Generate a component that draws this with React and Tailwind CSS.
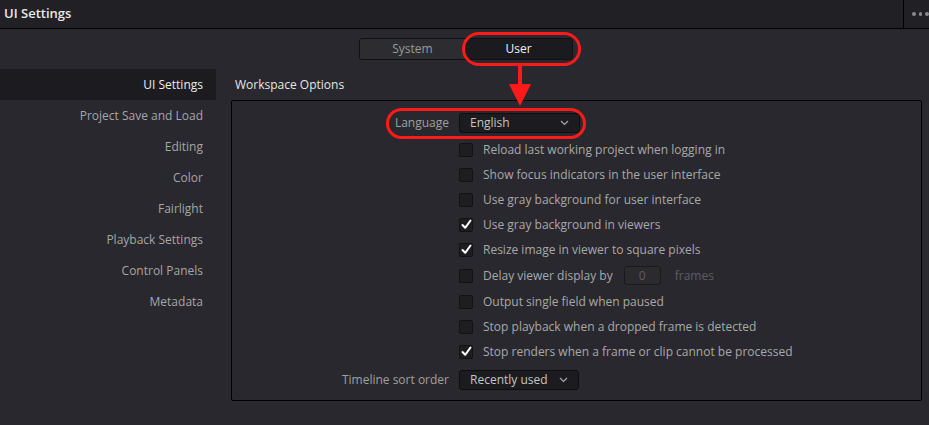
import React from 'react'

const sidebarItems = [
  'UI Settings',
  'Project Save and Load',
  'Editing',
  'Color',
  'Fairlight',
  'Playback Settings',
  'Control Panels',
  'Metadata',
]

const options = [
  { label: 'Reload last working project when logging in', checked: false },
  { label: 'Show focus indicators in the user interface', checked: false },
  { label: 'Use gray background for user interface', checked: false },
  { label: 'Use gray background in viewers', checked: true },
  { label: 'Resize image in viewer to square pixels', checked: true },
  { label: 'Delay viewer display by', checked: false, delay: true },
  { label: 'Output single field when paused', checked: false },
  { label: 'Stop playback when a dropped frame is detected', checked: false },
  { label: 'Stop renders when a frame or clip cannot be processed', checked: true },
]

function Checkbox({ checked }) {
  return (
    <div className="w-[14px] h-[14px] rounded-[2px] bg-[#1e1e22] border border-[#121214] flex items-center justify-center">
      {checked && (
        <svg width="11" height="11" viewBox="0 0 11 11">
          <path d="M1.5 6 L4.2 8.8 L9.5 1.5" fill="none" stroke="#fff" strokeWidth="2" strokeLinecap="round" strokeLinejoin="round" />
        </svg>
      )}
    </div>
  )
}

function Chevron() {
  return (
    <svg width="9" height="6" viewBox="0 0 9 6">
      <path d="M1 1 L4.5 4.5 L8 1" fill="none" stroke="#a8a8a8" strokeWidth="1.2" />
    </svg>
  )
}

function Dropdown({ value, className }) {
  return (
    <div className={`h-[20px] bg-[#1c1c20] border border-[#0e0e10] rounded-[3px] flex items-center justify-between pl-[10px] pr-[10px] text-[#c4c4c4] ${className}`}>
      <span>{value}</span>
      <Chevron />
    </div>
  )
}

export default function App() {
  return (
    <div
      className="relative w-[929px] h-[425px] bg-[#28282e] text-[12px] overflow-hidden"
      style={{ fontFamily: '"Open Sans", "Noto Sans", sans-serif' }}
    >
      {/* Header */}
      <div className="h-[29px] bg-[#202025] border-b border-black flex items-stretch">
        <div className="flex-1 flex items-center pl-[4px] text-[13px] font-semibold text-[#e8e8e8]">UI Settings</div>
        <div className="w-[26px] border-l border-black flex items-center gap-[3px] pl-[8px]">
          <span className="w-[4px] h-[4px] rounded-full bg-[#8a8a8e]" />
          <span className="w-[4px] h-[4px] rounded-full bg-[#8a8a8e]" />
          <span className="w-[4px] h-[4px] rounded-full bg-[#8a8a8e]" />
        </div>
      </div>

      {/* Tabs */}
      <div className="flex justify-center mt-[9px] ml-[3px]">
        <div className="flex h-[22px] border border-[#111113] rounded-[3px] overflow-hidden">
          <div className="w-[105px] flex items-center justify-center bg-[#2c2c31] text-[#9a9a9a]">System</div>
          <div className="w-[107px] flex items-center justify-center bg-[#1b1b1f] text-[#f0f0f0]">User</div>
        </div>
      </div>

      {/* Main */}
      <div className="flex mt-[9px]">
        <div className="w-[216px] flex flex-col">
          {sidebarItems.map((item, i) => (
            <div
              key={item}
              className={`h-[31px] flex items-center justify-end pr-[13px] ${i === 0 ? 'bg-[#1c1c20] text-[#ececec]' : 'text-[#a6a6a6]'}`}
            >
              {item}
            </div>
          ))}
        </div>

        <div className="flex-1 ml-[15px] mr-[7px] flex flex-col">
          <div className="h-[31px] flex items-center pl-[4px] text-[#e6e6e6]">Workspace Options</div>
          <div className="h-[301px] border border-black rounded-[2px] pt-[12px]">
            <div className="flex items-center h-[20px]">
              <div className="w-[217px] text-right text-[#a0a0a0]">Language</div>
              <Dropdown value="English" className="ml-[10px] w-[121px]" />
            </div>
            <div className="mt-[4px]">
              {options.map((o) => (
                <div key={o.label} className={`flex items-center ${o.delay ? 'h-[27px]' : 'h-[25px]'}`}>
                  <div className="ml-[227px]">
                    <Checkbox checked={o.checked} />
                  </div>
                  <span className="ml-[10px] text-[#a8a8a8]">{o.label}</span>
                  {o.delay && (
                    <>
                      <div className="ml-[11px] w-[37px] h-[19px] border border-[#1a1a1d] rounded-[3px] bg-[#2a2a2f] flex items-center justify-center text-[#5e5e62]">0</div>
                      <span className="ml-[14px] text-[#5e5e62]">frames</span>
                    </>
                  )}
                </div>
              ))}
            </div>
            <div className="flex items-center h-[20px] mt-[6px]">
              <div className="w-[217px] text-right text-[#a0a0a0]">Timeline sort order</div>
              <Dropdown value="Recently used" className="ml-[10px] w-[120px]" />
            </div>
          </div>
        </div>
      </div>

      {/* Red annotations */}
      <div className="absolute left-[462px] top-[32px] w-[119px] h-[34px] border-[3px] border-[#ff1a1a] rounded-full" />
      <div className="absolute left-[386px] top-[108px] w-[200px] h-[31px] border-[3px] border-[#ff1a1a] rounded-full" />
      <svg className="absolute left-[505px] top-[64px]" width="30" height="44" viewBox="0 0 30 44">
        <rect x="13" y="0" width="4" height="22" fill="#ff1a1a" />
        <path d="M4 20 L26 20 L15 42 Z" fill="#ff1a1a" />
      </svg>
    </div>
  )
}
